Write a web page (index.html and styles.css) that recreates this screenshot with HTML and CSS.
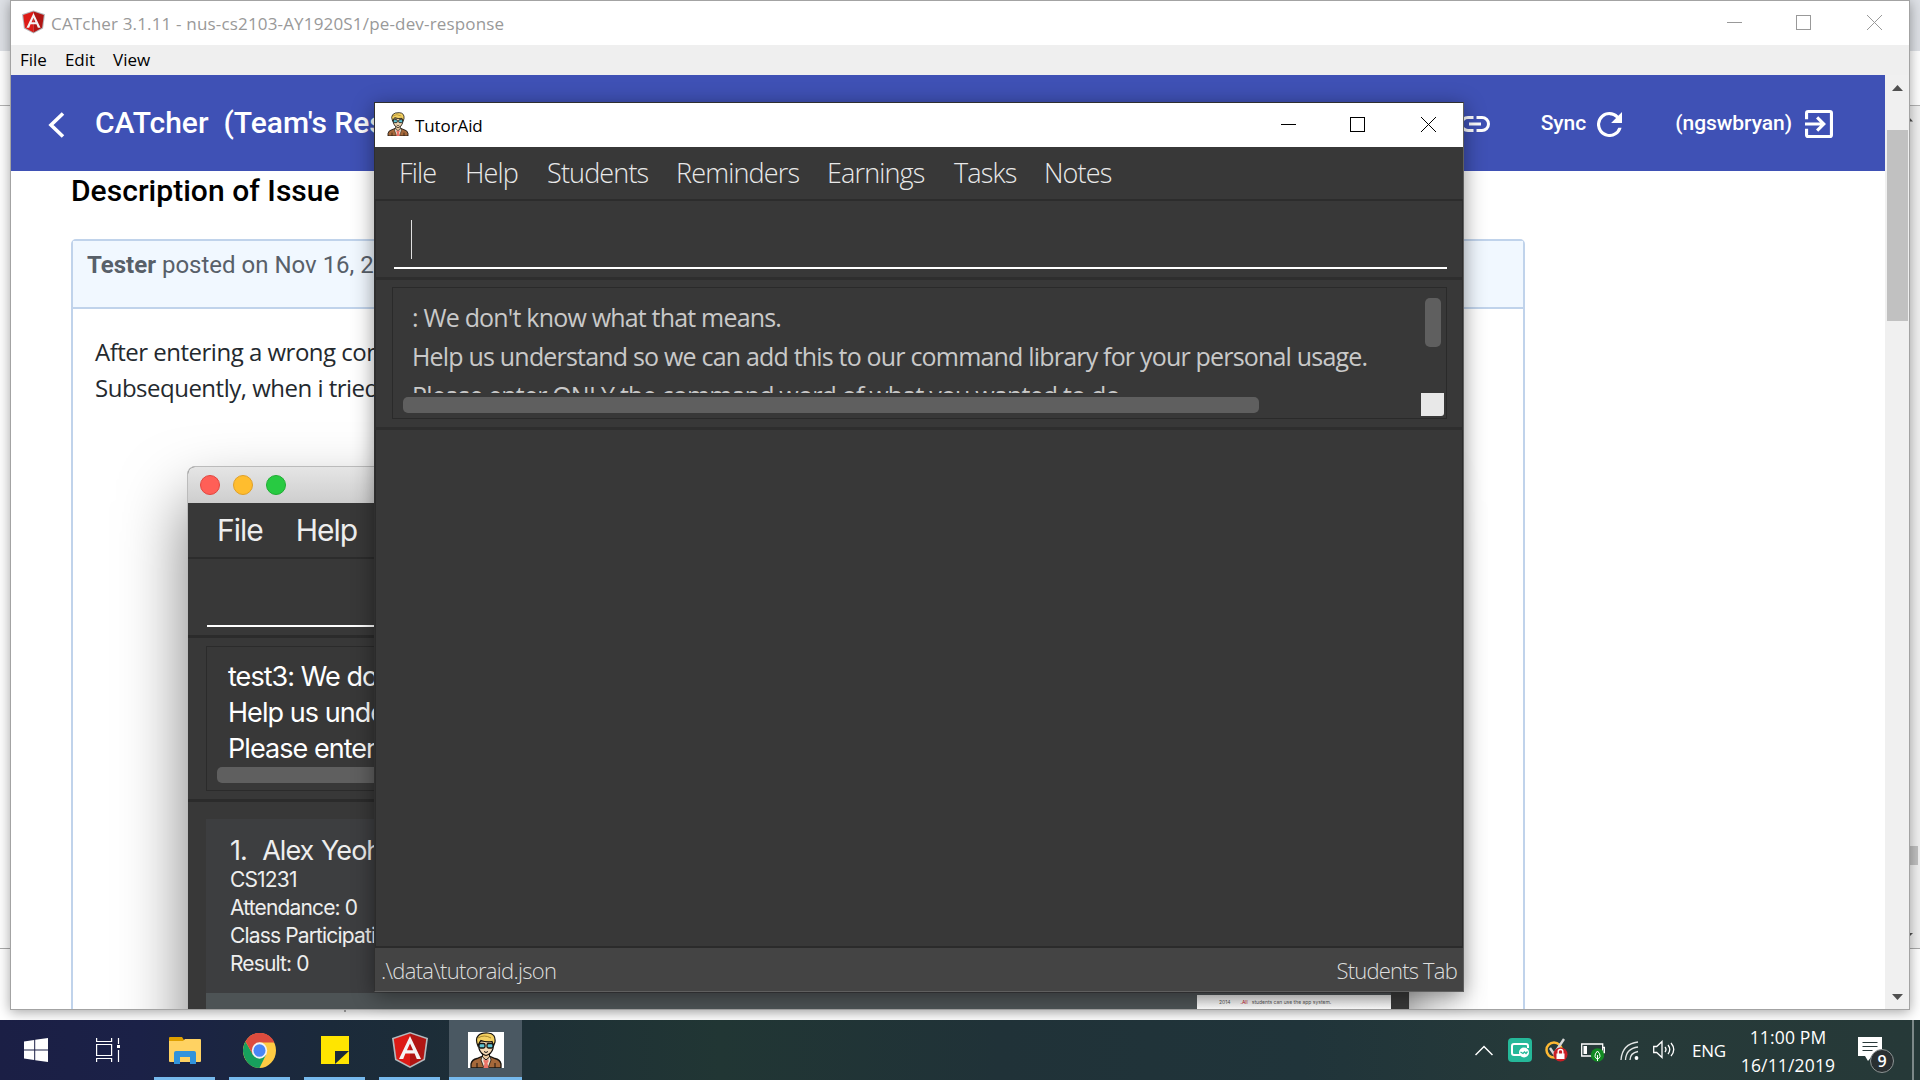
FILE: index.html
```html
<!DOCTYPE html>
<html lang="en">
<head>
<meta charset="utf-8">
<title>CATcher</title>
<link rel="stylesheet" href="styles.css">
</head>
<body>
<svg class="defs" width="0" height="0">
  <symbol id="angular" viewBox="0 0 36 36">
    <path d="M18 0 36 6 33 28 18 36 3 28 0 6Z" fill="#b5b9bd"/>
    <path d="M18 1.6 34.2 7 31.5 27 18 34.3Z" fill="#b01513"/>
    <path d="M18 1.6 1.8 7 4.5 27 18 34.3Z" fill="#dd1b16"/>
    <path d="M18 4 7 27h4.2l2.2-5.5h9.2l2.2 5.500H29ZM18 11.500l3.100 6.700h-6.200Z" fill="#f4f4f4" fill-rule="evenodd"/>
  </symbol>
  <symbol id="tutor" viewBox="0 0 36 36">
    <path d="M3 36v-4q1-4.500 6-5.500l5-2h8l5 2q5 1 6 5.500v4Z" fill="#a5683a" stroke="#17130f" stroke-width="1.300"/>
    <path d="m14 24-1 4 3 8h4l3-8-1-4Z" fill="#f0ead8" stroke="#17130f" stroke-width=".8"/>
    <path d="m15.500 27 2.500 1.500 2.500-1.500v3l-1 1 1 5h-5l1-5-1-1Z" fill="#ed7468"/>
    <path d="M14.500 20v5l3.500 3 3.500-3v-5Z" fill="#e8c69b" stroke="#17130f" stroke-width="1"/>
    <path d="M11 9h14v7.500q-1.500 5.500-7 7-5.500-1.500-7-7Z" fill="#f4d9b4" stroke="#17130f" stroke-width="1.200"/>
    <path d="M10 14q-3-7 0-10 3-3.500 10-3 8 .5 7 9l-1.500 4-1.500-4.500q-6 1-11-1-2 2-3 5.500Z" fill="#f3d061" stroke="#17130f" stroke-width="1.200"/>
    <path d="M10 6q6-4 13 0" fill="none" stroke="#9c7a24" stroke-width=".9"/>
    <rect x="11" y="11.500" width="6" height="4.500" rx="1.500" fill="#5fc4d4" stroke="#17130f" stroke-width="1.300"/>
    <rect x="19" y="11.500" width="6" height="4.500" rx="1.500" fill="#5fc4d4" stroke="#17130f" stroke-width="1.300"/>
    <path d="M16 19.500q2 2 4 0" fill="none" stroke="#17130f" stroke-width="1"/>
    <path d="M9 31v5M27 31v5" stroke="#17130f" stroke-width="1"/>
  </symbol>
</svg>

<div class="desktop">
  <div class="backdrop">
    <div class="bd-tabs"></div>
    <div class="bd-bar"></div>
    <div class="bd-page">
      <svg width="11" height="842" viewBox="0 0 11 842">
        <path d="M0 11v4.500h4Z" fill="#505050"/>
        <rect width="9" height="19" y="740" fill="#c1c1c1"/>
        <path d="M0 827h4l-4 4Z" fill="#505050"/>
      </svg>
    </div>
    <div class="bd-foot"></div>
  </div>

  <section class="window catcher">
    <header class="cat-title">
      <svg width="23" height="24"><use href="#angular"/></svg>
      <span class="cat-name">CATcher 3.1.11 - nus-cs2103-AY1920S1/pe-dev-response</span>
      <svg class="controls" width="157" height="16" viewBox="0 0 157 16" fill="none" stroke="#999" shape-rendering="crispEdges">
        <path d="M0 7.500h15M69.500.5h14v14h-14Z"/><path d="m140 0 15 15m0-15-15 15" shape-rendering="auto"/>
      </svg>
    </header>
    <nav class="cat-menu"><span>File</span><span>Edit</span><span>View</span></nav>
    <div class="cat-body">
      <div class="cat-view">
        <div class="toolbar">
          <svg class="back" width="17" height="26" viewBox="0 0 17 26" fill="none" stroke="#fff" stroke-width="3.600"><path d="M15 1.500 3 13l12 11.500"/></svg>
          <span class="brand">CATcher &nbsp;(Team's Response)</span>
          <div class="tools">
            <svg width="30" height="16" viewBox="0 0 30 16" fill="none" stroke="#fff" stroke-width="3"><path d="M13.500 1.500H8a6.500 6.500 0 0 0 0 13h5.500M16.500 1.500H22a6.500 6.500 0 0 1 0 13h-5.500M9 8h12"/></svg>
            <span class="sync">Sync</span>
            <svg class="reload" width="25" height="25" viewBox="4 4 16 16" fill="#fff"><path d="M17.650 6.350A7.960 7.960 0 0 0 12 4a8 8 0 1 0 7.730 10h-2.080A6 6 0 1 1 12 6c1.660 0 3.140.69 4.220 1.780L13 11h7V4Z"/></svg>
            <span class="user">(ngswbryan)</span>
            <svg class="exit" width="28" height="28" viewBox="3 3 18 18" fill="#fff"><path d="M10.090 15.590 11.500 17l5-5-5-5-1.410 1.410L12.670 11H3v2h9.670ZM19 3H5a2 2 0 0 0-2 2v4h2V5h14v14H5v-4H3v4a2 2 0 0 0 2 2h14a2 2 0 0 0 2-2V5a2 2 0 0 0-2-2Z"/></svg>
          </div>
        </div>
        <div class="content">
          <h3>Description of Issue</h3>
          <article class="post">
            <div class="post-head"><b>Tester</b> posted on Nov 16, 2019</div>
            <div class="post-body">
              <p>After entering a wrong command,<br>Subsequently, when i tried</p>
              <div class="mac">
                <div class="mac-title"><i class="red"></i><i class="yellow"></i><i class="green"></i></div>
                <div class="mac-menu"><span>File</span><span>Help</span></div>
                <div class="mac-input"><div></div></div>
                <div class="mac-result">
                  <div class="mac-box">
                    <p>test3: We don't know</p><p>Help us understand</p><p>Please enter ONLY</p>
                    <div class="mac-thumb"></div>
                  </div>
                </div>
                <div class="mac-list">
                  <div class="mac-card">
                    <p class="who">1.&nbsp; Alex Yeoh</p><p>CS1231</p><p>Attendance: 0</p><p>Class Participation: 0</p><p>Result: 0</p>
                  </div>
                  <div class="mac-next"><div class="peek"><span>2014</span><span class="mark">.All</span><span>students can use the app system.</span></div></div>
                </div>
              </div>
            </div>
          </article>
        </div>
      </div>
      <div class="scroll">
        <svg width="11" height="6"><path d="M5.500 0 11 6H0Z" fill="#505050"/></svg>
        <div class="scroll-thumb"></div>
        <svg class="down" width="11" height="6"><path d="M0 0h11L5.500 6Z" fill="#505050"/></svg>
      </div>
    </div>
  </section>

  <section class="window tutor">
    <header class="tut-title">
      <svg width="24" height="24"><use href="#tutor"/></svg>
      <span>TutorAid</span>
      <svg class="controls" width="156" height="16" viewBox="0 0 156 16" fill="none" stroke="#000" shape-rendering="crispEdges">
        <path d="M0 7.500h15M69.500.5h14v14h-14Z"/><path d="m140 0 15 15m0-15-15 15" shape-rendering="auto"/>
      </svg>
    </header>
    <nav class="tut-menu"><span>File</span><span>Help</span><span>Students</span><span>Reminders</span><span>Earnings</span><span>Tasks</span><span>Notes</span></nav>
    <div class="tut-command"><div class="field"><i class="caret"></i></div></div>
    <div class="tut-result">
      <div class="result-box">
        <div class="result-text"><p>: We don't know what that means.</p><p>Help us understand so we can add this to our command library for your personal usage.</p><p>Please enter ONLY the command word of what you wanted to do.</p></div>
        <div class="vtrack"><div class="vthumb"></div></div>
        <div class="hthumb"></div>
        <div class="corner"></div>
      </div>
    </div>
    <div class="tut-main"></div>
    <footer class="tut-status"><span>.\data\tutoraid.json</span><span class="tab">Students Tab</span></footer>
  </section>

  <div class="taskbar">
    <div class="task start"><svg width="24" height="24" viewBox="0 0 24 24" fill="#fff"><path d="M0 3.400 10.200 2v9.500H0ZM11.200 1.800 24 0v11.500H11.200ZM0 12.500h10.200V22L0 20.600ZM11.200 12.500H24V24l-12.800-1.800Z"/></svg></div>
    <div class="task view"><svg width="24" height="24" viewBox="0 0 24 24" fill="none" stroke="#fff" stroke-width="1.200"><path d="M.6 0v3.500h15V0M.6 6.500h15v11H.6ZM.6 24v-3.500h15V24M22.500 0v6M22.500 12v12"/><path d="M21 7h3v3h-3Z" fill="#fff" stroke="none"/></svg></div>
    <div class="task open"><svg width="32" height="28" viewBox="0 0 32 28"><path d="M0 2q0-1 1-1h12l2 3v3H0Z" fill="#dfa000"/><path d="M0 5h14l2-2h15q1 0 1 1v21q0 1-1 1H1q-1 0-1-1Z" fill="#ffd262"/><path d="M5 28V17q0-2 2-2h18q2 0 2 2v11h-6v-7H11v7Z" fill="#3293dc"/></svg></div>
    <div class="task open"><svg width="33" height="35" viewBox="-16.500 -16.500 33 33" preserveAspectRatio="none"><circle r="16.500" fill="#ffcb43"/><path d="M0 0 6.500 4 0 16.500A16.500 16.500 0 0 1-14-8.500L-6.500 4Z" fill="#17a05d"/><path d="M-14-8.500A16.500 16.500 0 0 1 15-7.500H0L-6.500 4Z" fill="#dc4b3e"/><circle r="7.700" fill="#f3f3f3"/><circle r="6" fill="#4a86f5"/></svg></div>
    <div class="task open"><svg width="28" height="28" viewBox="0 0 28 28"><path d="M0 0h28v15H14v13H0Z" fill="#ffe500"/><path d="M14 15h13L14 28Z" fill="#1b2a38"/><path d="M28 15v13H14Z" fill="#ffe500"/></svg></div>
    <div class="task open"><svg width="36" height="36"><use href="#angular"/></svg></div>
    <div class="task open active"><svg class="tile" width="36" height="36"><use href="#tutor"/></svg></div>
    <div class="tray">
      <svg width="18" height="11" fill="none" stroke="#fff" stroke-width="1.500"><path d="m.5 10 8.500-8.500 8.500 8.500"/></svg>
      <svg class="green-app" width="24" height="24" fill="none"><rect width="24" height="24" rx="4" fill="#25b899"/><path d="M12 17H6q-2 0-2-2V8q0-2 2-2h12q2 0 2 2v2" stroke="#fff" stroke-width="2"/><circle cx="16" cy="14.500" r="5" fill="#fff"/><path d="m12.500 14 2.500 1.500 1.500-1.500 1.500 1.500 1.500-2" stroke="#25b899" stroke-width="1.300"/></svg>
      <svg class="norton" width="23" height="24" fill="none"><circle cx="9" cy="12" r="7.500" stroke="#fdb933" stroke-width="2.500"/><path d="m5 10 4 6L19 1" stroke="#d8d8d8" stroke-width="2.400"/><circle cx="15.500" cy="16.500" r="7" fill="#c91f25"/><path d="M11.500 15.500h8v5.500h-8Z" fill="#fff"/><path d="M13.200 16v-2.500q0-2 2.300-2t2.300 2V16" stroke="#fff" stroke-width="1.400"/></svg>
      <svg class="battery" width="24" height="19" fill="none"><path d="M.7 1h21v12H.7ZM22 4.500h1.500v5H22" stroke="#fff" stroke-width="1.300"/><path d="M2.500 3H6v8H2.500Z" fill="#fff"/><circle cx="16.500" cy="12" r="6.700" fill="#128a22"/><path d="M16.500 8q-3 3-2.500 5.500 1 2.500 2.500 2.500t2.500-2.500Q19.500 11 16.500 8Zm0 4v6" stroke="#fff" stroke-width="1"/></svg>
      <svg class="wifi" width="20" height="20" fill="none" stroke="#e2e5e5" stroke-width="1.300"><path d="M1 19Q2 3 18 1M5.500 19Q6 7.500 18 6M10 19q0-7 8-8.500"/><circle cx="16.500" cy="17" r="1.900" fill="#fff" stroke="none"/></svg>
      <svg class="sound" width="23" height="20" fill="none" stroke="#fff" stroke-width="1.300"><path d="M.7 6.500h3L9 1.500v16L3.700 12.500h-3ZM12 7q2 2.500 0 5M15 5q3.500 4.500 0 9M18 3q5.500 6.500 0 13"/></svg>
      <span class="lang">ENG</span>
      <div class="clock"><span>11:00 PM</span><span>16/11/2019</span></div>
      <div class="notice"><svg width="24" height="25"><path d="M0 0h24v19H14l-4 5-3-5H0Z" fill="#fff"/><path d="M4.500 5.500h15M4.500 9.500h15M4.500 13.500h10" stroke="#2a3a3a" stroke-width="1.100"/></svg><b>9</b></div>
      <div class="show-desktop"></div>
    </div>
  </div>
</div>
</body>
</html>
```
FILE: styles.css
```css
* { box-sizing: border-box; }
body { margin: 0; font-family: "Open Sans", "Noto Sans", sans-serif; }
p, h3 { margin: 0; font-weight: 400; }
svg { display: block; flex: none; }
.defs { position: absolute; }
span, p { white-space: nowrap; }
.desktop { position: relative; width: 1920px; height: 1080px; overflow: hidden; background: #fff; display: flex; flex-direction: column; }

.backdrop { height: 1020px; display: flex; flex-direction: column; }
.bd-tabs { height: 51px; background: #dee1e6; }
.bd-bar { height: 55px; background: #fff; border-bottom: 1px solid #b3b3b3; }
.bd-page { height: 843px; border-bottom: 1px solid #aaa; display: flex; justify-content: flex-end; background: linear-gradient(90deg, #fff 50%, #f1f1f1 50%); }
.bd-foot { height: 63px; margin-left: 344px; border-left: 2px solid #aaa; background: #fff; }

.window { position: absolute; display: flex; flex-direction: column; }
.controls { margin-left: auto; }

.catcher { left: 10px; top: 0; width: 1900px; height: 1010px; border: 1px solid #a3a3a3; box-shadow: 0 2px 12px rgba(0,0,0,.36); background: #fff; }
.cat-title { height: 44px; display: flex; align-items: center; padding: 0 25px 0 11px; color: #999; font-size: 17px; }
.cat-title > svg:first-child { margin-top: -2px; }
.cat-name { margin: 1px 0 0 6px; letter-spacing: .17px; }
.cat-menu { height: 30px; background: #efefef; display: flex; gap: 18px; padding-left: 9px; font-size: 17px; line-height: 29px; letter-spacing: 0; }
.cat-body { flex: 1; min-height: 0; display: flex; }
.cat-view { width: 1874px; overflow: hidden; display: flex; flex-direction: column; font-family: Roboto, sans-serif; }
.toolbar { height: 96px; flex: none; background: #3f51b5; color: #fff; display: flex; align-items: center; padding: 0 52px 0 37px; font-weight: 500; }
.back { margin-top: 4px; }
.brand { margin: -2px 0 0 30px; font-size: 30px; }
.tools { margin-left: auto; display: flex; align-items: center; font-size: 21px; padding-top: 2px; }
.sync { margin-left: 51px; margin-top: -2px; }
.reload { margin-left: 11px; }
.user { margin-left: 53px; margin-top: -2px; letter-spacing: -.04px; }
.exit { margin-left: 13px; }
.content { padding: 2px 0 0 60px; }
h3 { font-size: 30px; font-weight: 500; line-height: 36px; color: #000; letter-spacing: .04px; }
.post { width: 1454px; height: 900px; margin-top: 30px; border: 2px solid #c0d3eb; border-radius: 5px 5px 0 0; }
.post-head { height: 68px; background: #f1f8ff; border-bottom: 2px solid #c0d3eb; padding: 7px 14px; font-size: 24px; line-height: 34px; color: #586069; white-space: nowrap; }
.post-body { padding: 25px 22px; }
.post-body > p { font-family: "Open Sans", sans-serif; font-size: 24px; line-height: 36px; letter-spacing: -.5px; color: #24292e; }
.mac { width: 1223px; height: 700px; margin: 60px 0 0 92px; border-radius: 8px 8px 0 0; border: 1px solid #bbb; background: #383838; box-shadow: 0 34px 65px rgba(0,0,0,.5); font-family: Inter, sans-serif; color: #eee; display: flex; flex-direction: column; }
.mac-title { height: 36px; flex: none; border-radius: 7px 7px 0 0; background: linear-gradient(#e5e5e5, #cecece); display: flex; gap: 13px; align-items: center; padding-left: 12px; }
.mac-title i { width: 20px; height: 20px; border-radius: 50%; }
.red { background: #ff5f57; border: 1px solid #e2463f; }
.yellow { background: #ffbd2e; border: 1px solid #e0a028; }
.green { background: #28ca42; border: 1px solid #1fae33; }
.mac-menu { height: 56px; flex: none; border-bottom: 2px solid #2c2c2c; display: flex; gap: 33px; padding: 0 0 0 29px; font-size: 30px; line-height: 54px; letter-spacing: -1px; }
.mac-input { height: 79px; flex: none; padding: 66px 0 0 19px; border-bottom: 3px solid #2b2b2b; }
.mac-input div { height: 2px; background: #fff; }
.mac-result { height: 164px; flex: none; padding: 8px 18px; border-bottom: 3px solid #2b2b2b; }
.mac-box { height: 145px; border: 1px solid #2b2b2b; padding: 12px 0 0 21px; color: #fff; font-size: 27px; line-height: 36px; letter-spacing: -.95px; }
.mac-thumb { margin: 0 200px 0 -11px; height: 16px; border-radius: 5px; background: #5f5f5f; }
.mac-list { flex: 1; padding: 17px 18px 0; }
.mac-card { height: 174px; background: #3d3e40; padding: 16px 24px; font-size: 21px; line-height: 28px; letter-spacing: -.85px; }
.mac-card .who { font-size: 27px; line-height: 31px; letter-spacing: -.95px; word-spacing: 1px; }
.mac-next { height: 60px; background: #4d5355; display: flex; justify-content: flex-end; padding-top: 2px; }
.peek { width: 194px; background: linear-gradient(#ddd, #fff 14px); font-size: 5px; line-height: 14px; color: #555; letter-spacing: 0; padding-left: 22px; display: flex; gap: 4px; }
.peek .mark { color: #b23; margin-left: 6px; }
.scroll { width: 24px; background: #f0f0f0; display: flex; flex-direction: column; align-items: center; padding: 10px 0 9px; }
.scroll-thumb { width: 21px; height: 191px; margin-top: 39px; background: #c1c1c1; }
.down { margin-top: auto; }

.tutor { left: 374px; top: 102px; width: 1090px; height: 890px; border: 1px solid #2f2f2f; border-right-color: #5f5f5f; border-bottom-color: #5f5f5f; box-shadow: 0 4px 20px rgba(0,0,0,.42); background: #383838; }
.tut-title { height: 44px; flex: none; background: #fff; display: flex; align-items: center; padding: 0 26px 0 11px; font-size: 17px; color: #000; }
.tut-title > svg:first-child { margin-top: -2px; }
.tut-title span { margin: 1px 0 0 5px; letter-spacing: -.1px; }
.tut-menu { height: 54px; flex: none; border-bottom: 2px solid #2c2c2c; display: grid; grid-template-columns: 66px 82px 129px 151px 127px 90px auto; padding-left: 24px; font-size: 27px; font-weight: 300; line-height: 52px; letter-spacing: -.85px; color: #e9e9e9; }
.tut-command { height: 79px; flex: none; padding: 19px 15px 0 18px; border: 1px solid #2e2e2e; border-width: 0 1px 3px; }
.field { height: 49px; border-bottom: 2px solid #fff; padding-left: 17px; }
.caret { display: block; width: 1px; height: 39px; background: #e0e0e0; }
.tut-result { height: 150px; flex: none; padding: 7px 15px 0 16px; border: 1px solid #2e2e2e; border-width: 0 1px 3px; }
.result-box { height: 132px; border: 1px solid #2a2a2a; padding: 10px 5px 1px 10px; display: grid; grid-template-columns: 1018px 23px; grid-template-rows: 95px 23px; }
.result-text { overflow: hidden; padding: 0 0 0 9px; color: #c9c9c9; font-size: 25px; line-height: 39px; font-weight: 350; }
.result-text p { letter-spacing: -.81px; }
.vthumb { width: 16px; height: 49px; margin-left: 4px; border-radius: 5px; background: #5f5f5f; }
.hthumb { width: 856px; height: 16px; margin-top: 4px; border-radius: 5px; background: #5f5f5f; }
.corner { background: #e8e8e8; border-radius: 0 0 3px 0; }
.tut-main { flex: 1; border: 1px solid #2b2b2b; border-width: 0 1px 2px; }
.tut-status { height: 43px; flex: none; background: #444; display: flex; justify-content: space-between; padding: 0 6px; font-size: 22px; font-weight: 300; line-height: 45px; letter-spacing: -.7px; color: #dedede; }
.tut-status .tab { letter-spacing: -.8px; }

.taskbar { position: relative; height: 60px; flex: none; display: flex; background: linear-gradient(90deg, #1b1f45 0, #1b2147 140px, #1b2a3a 330px, #1e3036 530px, #213634 720px, #203238 1000px, #20343a 1300px, #263a39 1560px, #263938 100%); color: #fff; }
.task { width: 61px; margin-right: 14px; display: flex; align-items: center; justify-content: center; }
.start { width: 72px; margin: 0; padding-bottom: 1px; }
.view { width: 72px; margin-right: 10px; padding-bottom: 1px; }
.open { border-bottom: 3px solid #76b9ed; padding-top: 3px; }
.active { width: 73px; margin: 0 0 0 -5px; background: #4a5862; }
.tile { background: #fff; }
.tray { margin-left: auto; height: 60px; display: flex; align-items: center; }
.green-app { margin-left: 15px; }
.norton { margin-left: 13px; }
.battery { margin: 4px 0 0 13px; }
.wifi { margin: 2px 0 0 15px; }
.sound { margin-left: 13px; }
.lang { margin: 1px 0 0 16px; font-size: 17px; width: 34px; letter-spacing: -.3px; }
.clock { margin-left: 15px; width: 94px; display: flex; flex-direction: column; align-items: center; font-size: 17.5px; line-height: 28px; padding-top: 2px; letter-spacing: .15px; }
.notice { position: relative; margin: -2px 0 0 23px; width: 24px; height: 25px; }
.notice b { position: absolute; left: 12px; top: 12px; width: 24px; height: 24px; border: 1px solid #8d9494; border-radius: 50%; background: #292f31; font-size: 16px; line-height: 22px; text-align: center; font-weight: 600; }
.show-desktop { width: 8px; height: 60px; margin-left: 30px; border-left: 2px solid #7c8888; }
```
